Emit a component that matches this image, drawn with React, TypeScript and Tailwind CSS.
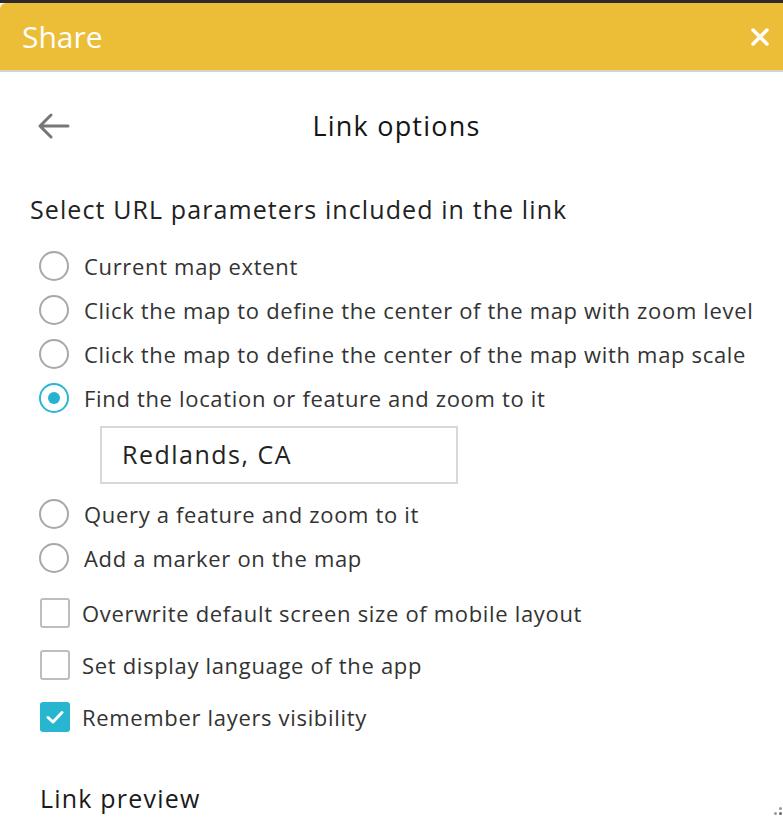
import React from "react";

const font = { fontFamily: '"Open Sans", "Noto Sans", sans-serif' };

function Radio({ checked, label }: { checked?: boolean; label: string }) {
  return (
    <div className="flex h-[44px] items-center">
      <div
        className={
          checked
            ? "ml-[9px] flex h-[30px] w-[30px] shrink-0 items-center justify-center rounded-full border-2 border-[#2bb7d3] bg-white"
            : "ml-[9px] h-[30px] w-[30px] shrink-0 rounded-full border-2 border-[#a8a8a8] bg-white"
        }
      >
        {checked && <div className="h-[12px] w-[12px] rounded-full bg-[#26b3cf]" />}
      </div>
      <span className="ml-[15px] whitespace-nowrap text-[22px] tracking-[0.67px] text-[#333]">{label}</span>
    </div>
  );
}

function Check({ checked, label }: { checked?: boolean; label: string }) {
  return (
    <div className="flex h-[52px] items-center">
      {checked ? (
        <div className="ml-[10px] flex h-[30px] w-[30px] shrink-0 items-center justify-center rounded-[3px] bg-[#28b5cf]">
          <svg width="20" height="16" viewBox="0 0 20 16" fill="none">
            <path d="M3 8.5 L8 13 L17 3.5" stroke="white" strokeWidth="3" strokeLinecap="round" strokeLinejoin="round" />
          </svg>
        </div>
      ) : (
        <div className="ml-[10px] h-[30px] w-[30px] shrink-0 rounded-[3px] border-2 border-[#bdbdbd] bg-white" />
      )}
      <span className="ml-[12px] whitespace-nowrap text-[22px] tracking-[0.67px] text-[#333]">{label}</span>
    </div>
  );
}

export default function App() {
  return (
    <div className="relative h-[817px] w-[783px] overflow-hidden bg-white" style={font}>
      <div className="h-[3px] bg-[#2b2b2b]" />
      <div className="flex h-[67px] items-center justify-between rounded-tl-[6px] bg-[#ecbd37] pl-[22px] pr-[12px]">
        <span className="text-[30px] text-white">Share</span>
        <svg width="20" height="20" viewBox="0 0 20 20" className="mr-[1px]">
          <path d="M3 3 L17 17 M17 3 L3 17" stroke="white" strokeWidth="3.5" strokeLinecap="round" />
        </svg>
      </div>
      <div className="h-[2px] bg-[#d4d4d4]" />

      <div className="pl-[30px] pr-[20px]">
        <div className="relative mt-[34px] flex h-[40px] items-center justify-center">
          <svg width="34" height="26" viewBox="0 0 34 26" className="absolute left-[6px] top-[7px]">
            <path d="M32 13 H4 M15 2 L4 13 L15 24" stroke="#777" strokeWidth="3" fill="none" strokeLinecap="round" strokeLinejoin="round" />
          </svg>
          <span className="text-[27px] tracking-[1.2px] text-[#151515]">Link options</span>
        </div>

        <div className="mt-[47px] whitespace-nowrap text-[25px] leading-[32px] tracking-[1.1px] text-[#222]">
          Select URL parameters included in the link
        </div>

        <div className="mt-[19px]">
          <Radio label="Current map extent" />
          <Radio label="Click the map to define the center of the map with zoom level" />
          <Radio label="Click the map to define the center of the map with map scale" />
          <Radio checked label="Find the location or feature and zoom to it" />
        </div>

        <div className="ml-[70px] mt-[6px] flex h-[58px] w-[358px] items-center border-2 border-[#d5d9dc] pl-[20px] text-[25px] tracking-[1.5px] text-[#222]">
          Redlands, CA
        </div>

        <div className="mt-[8px]">
          <Radio label="Query a feature and zoom to it" />
          <Radio label="Add a marker on the map" />
        </div>

        <div className="mt-[7px]">
          <Check label="Overwrite default screen size of mobile layout" />
          <Check label="Set display language of the app" />
          <Check checked label="Remember layers visibility" />
        </div>

        <div className="ml-[10px] mt-[38px] text-[25px] leading-[34px] tracking-[1.2px] text-[#1a1a1a]">Link preview</div>
      </div>

      <div className="absolute bottom-[2px] right-[1px] flex flex-col items-end gap-[2px]">
        <div className="h-[3px] w-[3px] rounded-full bg-[#999]" />
        <div className="flex gap-[2px]">
          <div className="h-[3px] w-[3px] rounded-full bg-[#999]" />
          <div className="h-[3px] w-[3px] rounded-full bg-[#666]" />
        </div>
      </div>
    </div>
  );
}
